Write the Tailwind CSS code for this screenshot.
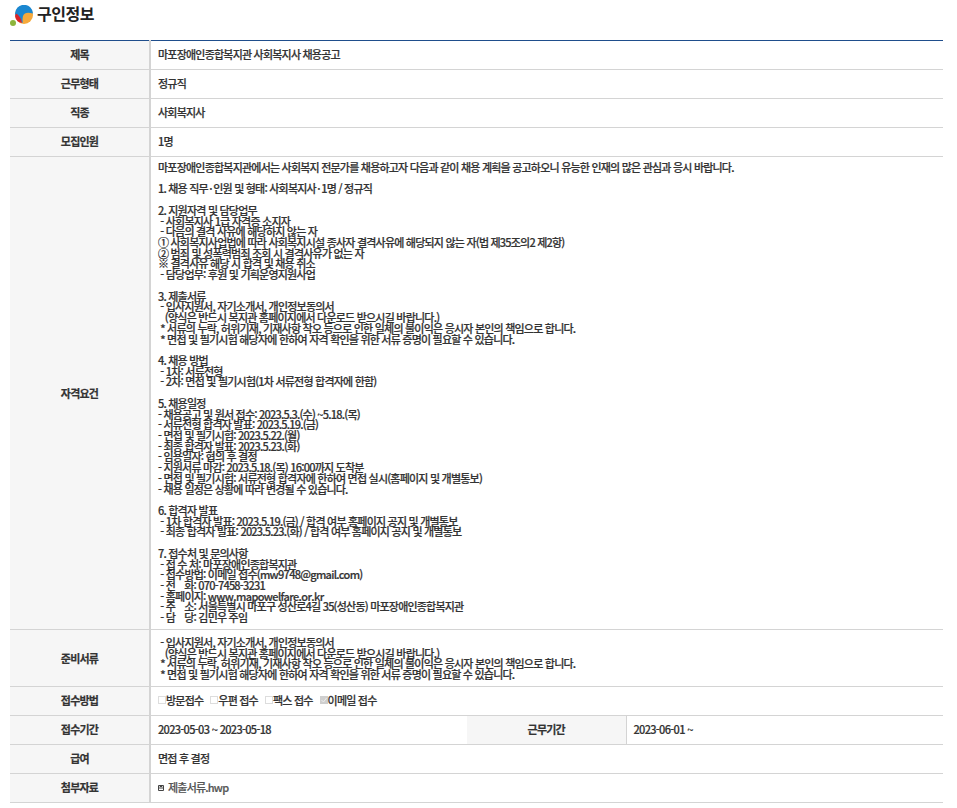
<!DOCTYPE html>
<html lang="ko">
<head>
    <meta charset="UTF-8">
    <title>구인정보</title>
    <script src="https://cdn.jsdelivr.net/npm/@tailwindcss/browser@4"></script>
</head>
<body class="bg-white font-['Noto_Sans_CJK_KR',sans-serif] text-[#333]">
    <div class="pl-[10px] pr-[14px]">
        <div class="flex items-start h-[40px]">
            <svg class="w-[24px] h-[24px] mt-[5px]" viewBox="0 0 24 24">
                <circle cx="3" cy="18" r="3" fill="#8db53c"/>
                <circle cx="14" cy="10" r="9" fill="#f6a93b"/>
                <path d="M5 9A9 9 0 0 1 23 8.6Q15 6 13 11Q12 15 13 18Q7 14 5 9Z" fill="#1b87d0"/>
                <path d="M5 11Q6 8 7 9Q11 12 12 18Q6 17 5 11Z" fill="#d8232a"/>
            </svg>
            <h1 class="ml-[3px] mt-px text-[16px] leading-[24px] font-bold text-[#222] tracking-[-0.5px]">구인정보</h1>
        </div>

        <table class="w-full table-fixed border-collapse border-t border-t-[#1f4e8c] text-[11px] font-medium tracking-[-0.79px] [-webkit-text-stroke:0.2px]">
            <colgroup>
                <col class="w-[140px]">
                <col class="w-[317px]">
                <col class="w-[159px]">
                <col>
            </colgroup>
            <tbody>
                <tr class="h-[29px] border-b border-[#d4d4d4]">
                    <th class="bg-[#f6f6f6] border-r-2 border-[#d4d4d4] font-bold pb-[2px]">제목</th>
                    <td colspan="3" class="pl-[7px] pb-[2px]">마포장애인종합복지관 사회복지사 채용공고</td>
                </tr>
                <tr class="h-[29px] border-b border-[#d4d4d4]">
                    <th class="bg-[#f6f6f6] border-r-2 border-[#d4d4d4] font-bold pb-[2px]">근무형태</th>
                    <td colspan="3" class="pl-[7px] pb-[2px]">정규직</td>
                </tr>
                <tr class="h-[29px] border-b border-[#d4d4d4]">
                    <th class="bg-[#f6f6f6] border-r-2 border-[#d4d4d4] font-bold pb-[2px]">직종</th>
                    <td colspan="3" class="pl-[7px] pb-[2px]">사회복지사</td>
                </tr>
                <tr class="h-[29px] border-b border-[#d4d4d4]">
                    <th class="bg-[#f6f6f6] border-r-2 border-[#d4d4d4] font-bold pb-[2px]">모집인원</th>
                    <td colspan="3" class="pl-[7px] pb-[2px]">1명</td>
                </tr>
                <tr class="border-b border-[#d4d4d4]">
                    <th class="bg-[#f6f6f6] border-r-2 border-[#d4d4d4] font-bold">자격요건</th>
                    <td colspan="3" class="pl-[7px] pt-[5px] pb-[6px] leading-[10.72px] whitespace-pre">마포장애인종합복지관에서는 사회복지 전문가를 채용하고자 다음과 같이 채용 계획을 공고하오니 유능한 인재의 많은 관심과 응시 바랍니다.

1. 채용 직무&thinsp;·&thinsp;인원 및 형태: 사회복지사&thinsp;·&thinsp;1명 / 정규직

2. 지원자격 및 담당업무
 - 사회복지사 1급 자격증 소지자
 - 다음의 결격 사유에 해당하지 않는 자
① 사회복지사업법에 따라 사회복지시설 종사자 결격사유에 해당되지 않는 자(법 제35조의2 제2항)
② 범죄 및 성폭력범죄 조회 시 결격사유가 없는 자
※ 결격사유 해당 시 합격 및 채용 취소
 - 담당업무: 후원 및 기획운영지원사업

3. 제출서류
 - 입사지원서, 자기소개서, 개인정보동의서
   (양식은 반드시 복지관 홈페이지에서 다운로드 받으시길 바랍니다.)
 * 서류의 누락, 허위기재, 기재사항 착오 등으로 인한 일체의 불이익은 응시자 본인의 책임으로 합니다.
 * 면접 및 필기시험 해당자에 한하여 자격 확인을 위한 서류 증명이 필요할 수 있습니다.

4. 채용 방법
 - 1차: 서류전형
 - 2차: 면접 및 필기시험(1차 서류전형 합격자에 한함)

5. 채용일정
- 채용공고 및 원서 접수: 2023.5.3.(수) ~5.18.(목)
- 서류전형 합격자 발표: 2023.5.19.(금)
- 면접 및 필기시험: 2023.5.22.(월)
- 최종 합격자 발표: 2023.5.23.(화)
- 임용일자: 협의 후 결정
- 지원서류 마감: 2023.5.18.(목) 16:00까지 도착분
- 면접 및 필기시험: 서류전형 합격자에 한하여 면접 실시(홈페이지 및 개별통보)
- 채용 일정은 상황에 따라 변경될 수 있습니다.

6. 합격자 발표
 - 1차 합격자 발표: 2023.5.19.(금) / 합격 여부 홈페이지 공지 및 개별통보
 - 최종 합격자 발표: 2023.5.23.(화) / 합격 여부 홈페이지 공지 및 개별통보

7. 접수처 및 문의사항
 - 접 수 처: 마포장애인종합복지관
 - 접수방법: 이메일 접수(<span class="tracking-[-0.7px]">mw9748@gmail.com</span>)
 - 전    화: 070-7458-3231
 - 홈페이지: <span class="tracking-[-0.62px]">www.mapowelfare.or.kr</span>
 - 주    소: 서울특별시 마포구 성산로4길 35(성산동) 마포장애인종합복지관
 - 담    당: 김민우 주임</td>
                </tr>
                <tr class="border-b border-[#d4d4d4]">
                    <th class="bg-[#f6f6f6] border-r-2 border-[#d4d4d4] font-bold">준비서류</th>
                    <td colspan="3" class="pl-[7px] pt-[7px] pb-[6px] leading-[10.72px] whitespace-pre"> - 입사지원서, 자기소개서, 개인정보동의서
   (양식은 반드시 복지관 홈페이지에서 다운로드 받으시길 바랍니다.)
 * 서류의 누락, 허위기재, 기재사항 착오 등으로 인한 일체의 불이익은 응시자 본인의 책임으로 합니다.
 * 면접 및 필기시험 해당자에 한하여 자격 확인을 위한 서류 증명이 필요할 수 있습니다.</td>
                </tr>
                <tr class="h-[29px] border-b border-[#d4d4d4]">
                    <th class="bg-[#f6f6f6] border-r-2 border-[#d4d4d4] font-bold pb-[2px]">접수방법</th>
                    <td colspan="3" class="pl-[7px] pb-[2px]">
                        <span class="inline-flex items-center gap-[7px]">
                            <span class="inline-flex items-center"><span class="w-[8px] h-[8px] border border-[#ddd] bg-white"></span>방문접수</span>
                            <span class="inline-flex items-center"><span class="w-[8px] h-[8px] border border-[#ddd] bg-white"></span>우편 접수</span>
                            <span class="inline-flex items-center"><span class="w-[8px] h-[8px] border border-[#ddd] bg-white"></span>팩스 접수</span>
                            <span class="inline-flex items-center">
                                <svg class="w-[8px] h-[8px]" viewBox="0 0 8 8"><rect width="8" height="8" fill="#cfcfcf"/><path d="M1.5 4l2 2 3-4" fill="none" stroke="#eee" stroke-width="1"/></svg>
                                이메일 접수
                            </span>
                        </span>
                    </td>
                </tr>
                <tr class="h-[29px] border-b border-[#d4d4d4]">
                    <th class="bg-[#f6f6f6] border-r-2 border-[#d4d4d4] font-bold pb-[2px]">접수기간</th>
                    <td class="pl-[7px] pb-[2px] tracking-[-0.68px]">2023-05-03 ~ 2023-05-18</td>
                    <th class="bg-[#f6f6f6] border-r border-[#d4d4d4] font-bold pb-[2px]">근무기간</th>
                    <td class="pl-[7px] pb-[2px] tracking-[-0.68px]">2023-06-01 ~</td>
                </tr>
                <tr class="h-[29px] border-b border-[#d4d4d4]">
                    <th class="bg-[#f6f6f6] border-r-2 border-[#d4d4d4] font-bold pb-[2px]">급여</th>
                    <td colspan="3" class="pl-[7px] pb-[2px]">면접 후 결정</td>
                </tr>
                <tr class="h-[29px] border-b border-[#d4d4d4]">
                    <th class="bg-[#f6f6f6] border-r-2 border-[#d4d4d4] font-bold pb-[2px]">첨부자료</th>
                    <td colspan="3" class="pl-[7px] pb-[2px]">
                        <a href="#" class="inline-flex items-center text-[#555]">
                            <svg class="w-[6px] h-[6px] mr-[4px]" viewBox="0 0 6 6" fill="none" stroke="#444"><path d="M.5.5h5v5h-5zM.5 3h5M2 .5v1h2v-1"/></svg>
                            제출서류.hwp
                        </a>
                    </td>
                </tr>
            </tbody>
        </table>
    </div>
</body>
</html>
